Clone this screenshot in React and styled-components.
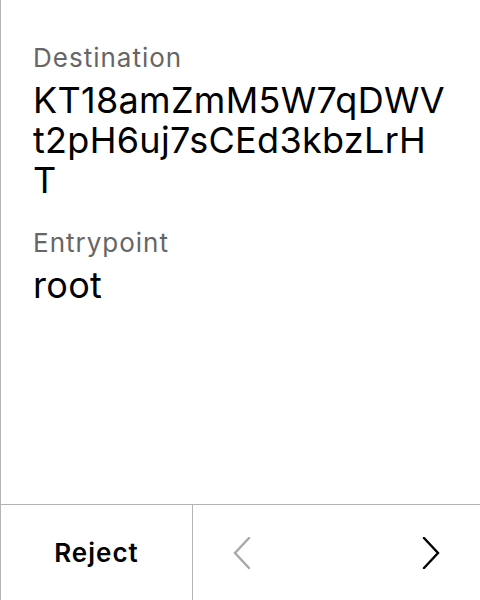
import styled, { createGlobalStyle } from 'styled-components'

const Global = createGlobalStyle`
  html, body {
    margin: 0;
    padding: 0;
    background: #fff;
  }
  body {
    font-family: Inter, "Noto Sans", sans-serif;
    color: #000;
  }
`

const Chevron = ({ dir, color }) => (
    <svg width="18" height="32" viewBox="0 0 18 32" fill="none">
        <polyline
            points={dir === 'left' ? '16,1 2,16 16,31' : '2,1 16,16 2,31'}
            stroke={color}
            strokeWidth="2.4"
            strokeLinecap="round"
            strokeLinejoin="miter"
        />
    </svg>
)

const App = () => {
    return (
        <>
            <Global />
            <Screen>
                <Content>
                    <Field>
                        <Label>Destination</Label>
                        <Value>KT18amZmM5W7qDWVt2pH6uj7sCEd3kbzLrHT</Value>
                    </Field>
                    <Field>
                        <Label>Entrypoint</Label>
                        <Value>root</Value>
                    </Field>
                </Content>
                <Footer>
                    <RejectButton>Reject</RejectButton>
                    <Pager>
                        <NavButton aria-label="previous" disabled>
                            <Chevron dir="left" color="#a8a8a8" />
                        </NavButton>
                        <NavButton aria-label="next">
                            <Chevron dir="right" color="#000" />
                        </NavButton>
                    </Pager>
                </Footer>
            </Screen>
        </>
    )
}

const Screen = styled.div`
    display: flex;
    flex-direction: column;
    width: 480px;
    height: 600px;
    box-sizing: border-box;
    border-left: 1px solid #b4b4b4;
`

const Content = styled.div`
    flex: 1;
    display: flex;
    flex-direction: column;
    gap: 27px;
    padding: 42px 32px 0 32px;
`

const Field = styled.div`
    display: flex;
    flex-direction: column;
    gap: 6px;
`

const Label = styled.div`
    font-size: 26px;
    line-height: 32px;
    letter-spacing: 1px;
    color: #666;
`

const Value = styled.div`
    font-size: 36px;
    line-height: 40px;
    letter-spacing: 0.3px;
    color: #000;
    word-break: break-all;
`

const Footer = styled.div`
    display: flex;
    height: 95px;
    border-top: 1px solid #b4b4b4;
`

const RejectButton = styled.button`
    width: 192px;
    border: none;
    border-right: 1px solid #b4b4b4;
    background: transparent;
    font-family: Inter, "Noto Sans", sans-serif;
    font-size: 26px;
    font-weight: 600;
    letter-spacing: 1px;
    color: #000;
    padding: 0;
`

const Pager = styled.div`
    flex: 1;
    display: flex;
    align-items: center;
    justify-content: space-between;
    padding: 0 40px;
`

const NavButton = styled.button`
    display: flex;
    border: none;
    background: transparent;
    padding: 0;
`

export default App
